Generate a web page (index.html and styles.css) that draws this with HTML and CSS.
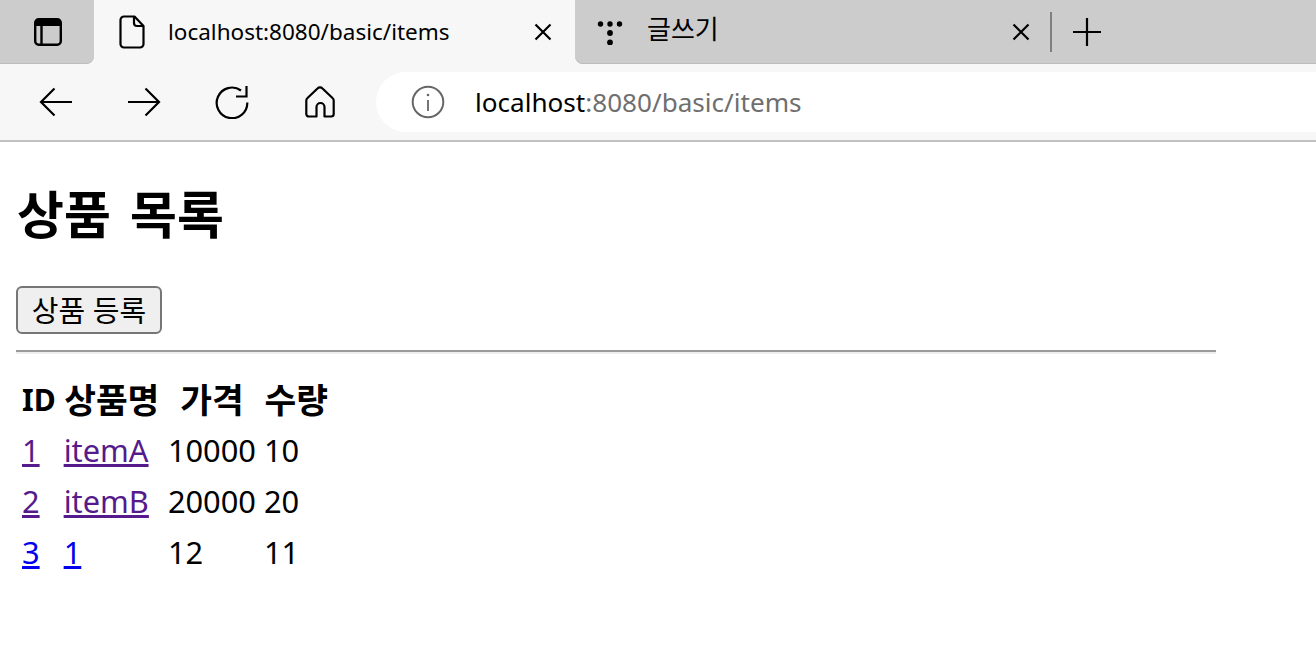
FILE: index.html

```html
<!DOCTYPE html>
<html lang="ko">
<head>
    <meta charset="UTF-8">
    <title>상품 목록</title>
    <link rel="stylesheet" href="styles.css">
</head>
<body>
<!-- Browser chrome -->
<header class="browser-chrome">
    <div class="tab-strip">
        <div class="tab-actions">
            <svg class="icon" width="30" height="30" viewBox="0 0 30 30" fill="none" stroke="#000" stroke-width="2.4">
                <rect x="2.2" y="2.2" width="25.6" height="25.6" rx="3.5"/>
                <path d="M3 3h24v6H3z" fill="#000" stroke="none"/>
                <path d="M8.5 9v19"/>
            </svg>
        </div>
        <div class="tab tab-active">
            <svg class="icon tab-icon" width="26" height="34" viewBox="0 0 26 34" fill="none" stroke="#000" stroke-width="2.2" stroke-linejoin="round">
                <path d="M5 1.5h10.5L24.5 11v18a3.500 3.500 0 0 1-3.500 3.500H5A3.500 3.500 0 0 1 1.500 29V5A3.500 3.500 0 0 1 5 1.500z"/>
                <path d="M15 1.500V8a3 3 0 0 0 3 3h6.500"/>
            </svg>
            <span class="tab-title">localhost:8080/basic/items</span>
            <svg class="icon" width="18" height="18" viewBox="0 0 18 18" stroke="#000" stroke-width="2.200">
                <path d="M1.500 1.500l15 15M16.500 1.500l-15 15"/>
            </svg>
        </div>
        <div class="tab-rest">
            <div class="tab">
                <svg class="icon tab-icon" width="26" height="26" viewBox="0 0 26 26" fill="#000">
                    <circle cx="3.500" cy="5" r="2.700"/>
                    <circle cx="13" cy="5" r="2.700"/>
                    <circle cx="22.500" cy="5" r="2.700"/>
                    <circle cx="13" cy="14" r="2.900"/>
                    <circle cx="13" cy="23.500" r="2.900"/>
                </svg>
                <span class="tab-title tab-title-ko">글쓰기</span>
                <svg class="icon" width="18" height="18" viewBox="0 0 18 18" stroke="#000" stroke-width="2.200">
                    <path d="M1.500 1.500l15 15M16.500 1.500l-15 15"/>
                </svg>
            </div>
            <div class="tab-divider"></div>
            <svg class="icon new-tab" width="28" height="28" viewBox="0 0 28 28" stroke="#000" stroke-width="2.200">
                <path d="M14 0v28M0 14h28"/>
            </svg>
        </div>
    </div>
    <nav class="toolbar">
        <div class="nav-button">
            <svg class="icon" width="34" height="30" viewBox="0 0 34 30" fill="none" stroke="#000" stroke-width="2.200">
                <path d="M33 15H2M15.500 1.500L2 15l13.500 13.500"/>
            </svg>
        </div>
        <div class="nav-button">
            <svg class="icon" width="34" height="30" viewBox="0 0 34 30" fill="none" stroke="#000" stroke-width="2.200">
                <path d="M1 15h31M18.500 1.500L32 15 18.500 28.500"/>
            </svg>
        </div>
        <div class="nav-button">
            <svg class="icon" width="34" height="34" viewBox="0 0 34 34" fill="none" stroke="#000" stroke-width="2.200">
                <path d="M26 5.500A15.300 15.300 0 1 0 32.300 17.500"/>
                <path d="M31.500 1v10.500H21"/>
            </svg>
        </div>
        <div class="nav-button">
            <svg class="icon" width="30" height="32" viewBox="0 0 30 32" fill="none" stroke="#000" stroke-width="2.200" stroke-linejoin="round">
                <path d="M12.500 2.500a3.500 3.500 0 0 1 5 0l10 9.500a3.500 3.500 0 0 1 1.200 2.600V28a2.500 2.500 0 0 1-2.500 2.500h-6.700V21a4 4 0 0 0-8 0v9.500H4a2.500 2.500 0 0 1-2.700-2.500V14.600A3.500 3.500 0 0 1 2.500 12z"/>
            </svg>
        </div>
        <div class="address-bar">
            <svg class="icon" width="34" height="34" viewBox="0 0 34 34" fill="none" stroke="#666" stroke-width="2">
                <circle cx="17" cy="17" r="15.300"/>
                <path d="M17 15v11" stroke-width="1.800"/>
                <circle cx="17" cy="10" r="1.300" fill="#666" stroke="none"/>
            </svg>
            <span class="address-text">localhost<span class="address-path">:8080/basic/items</span></span>
        </div>
    </nav>
</header>

<!-- Page content -->
<main class="page-content">
    <h1 class="page-title">상품 목록</h1>
    <button class="add-button" type="button">상품 등록</button>
    <hr class="divider">
    <table class="item-table">
        <thead>
        <tr>
            <th class="id-head">ID</th>
            <th>상품명</th>
            <th>가격</th>
            <th>수량</th>
        </tr>
        </thead>
        <tbody>
        <tr>
            <td><a class="visited" href="#">1</a></td>
            <td><a class="visited" href="#">itemA</a></td>
            <td>10000</td>
            <td>10</td>
        </tr>
        <tr>
            <td><a class="visited" href="#">2</a></td>
            <td><a class="visited" href="#">itemB</a></td>
            <td>20000</td>
            <td>20</td>
        </tr>
        <tr>
            <td><a href="#">3</a></td>
            <td><a href="#">1</a></td>
            <td>12</td>
            <td>11</td>
        </tr>
        </tbody>
    </table>
</main>
</body>
</html>
```

FILE: styles.css

```css
/* Body styling */
body {
    font-family: "Noto Sans", "Noto Sans CJK KR", sans-serif;
    background-color: #fff;
    color: #000;
    margin: 0;
    padding: 0;
}

.icon {
    display: block;
    flex: none;
}

/* Tab strip */
.tab-strip {
    display: flex;
    align-items: center;
    height: 64px;
    background-color: #f7f7f7;
}

.tab-actions {
    display: flex;
    align-items: center;
    justify-content: center;
    width: 94px;
    height: 64px;
    padding-left: 2px;
    box-sizing: border-box;
    background-color: #ccc;
    border-radius: 0 0 8px 0;
    box-shadow: inset 0 -1px 0 #bdbdbd;
}

.tab-rest {
    display: flex;
    align-items: center;
    flex: 1;
    height: 64px;
    background-color: #ccc;
    border-radius: 0 0 0 8px;
    box-shadow: inset 0 -1px 0 #bdbdbd;
}

.tab {
    display: flex;
    align-items: center;
    width: 475px;
    height: 64px;
    padding: 0 20px 0 22px;
    box-sizing: border-box;
    font-size: 24px;
}

.tab-active {
    width: 481px;
    padding: 0 23px 0 25px;
    background-color: #f7f7f7;
    border-radius: 10px 10px 0 0;
}

.tab-icon {
    margin-right: 23px;
}

.tab-title {
    flex: 1;
    margin-bottom: 2px;
    font-size: 22.5px;
    white-space: nowrap;
}

.tab-title-ko {
    margin-bottom: 8px;
    margin-left: 1px;
    font-size: 26px;
}

.tab-divider {
    width: 2px;
    height: 40px;
    background-color: #7f7f7f;
}

.new-tab {
    margin-left: 21px;
}

/* Toolbar */
.toolbar {
    display: flex;
    align-items: center;
    height: 76px;
    padding: 0 0 0 12px;
    background-color: #f7f7f7;
    border-bottom: 2px solid #c0c0c0;
}

.nav-button {
    display: flex;
    align-items: center;
    justify-content: center;
    width: 88px;
    height: 60px;
}

.address-bar {
    display: flex;
    align-items: center;
    flex: 1;
    height: 60px;
    margin-left: 12px;
    padding-left: 35px;
    background-color: #fff;
    border-radius: 30px 0 0 30px;
}

.address-text {
    margin-left: 30px;
    font-size: 26.100px;
}

.address-path {
    color: #6f6f6f;
}

/* Page content */
.page-content {
    width: 1200px;
    padding: 0 16px;
}

.page-title {
    margin: 0;
    padding-top: 40px;
    padding-left: 1px;
    font-size: 51px;
    line-height: 64px;
    font-weight: 700;
    word-spacing: 6px;
}

/* Add button */
.add-button {
    display: block;
    width: 146px;
    height: 48px;
    margin: 40px 0 0;
    padding: 0 0 3px;
    font-family: inherit;
    font-size: 29px;
    color: #000;
    background-color: #efefef;
    border: 2px solid #767676;
    border-radius: 6px;
}

.divider {
    height: 0;
    margin: 16px 0 0;
    border: 0;
    border-top: 2px solid #9a9a9a;
    border-bottom: 2px solid #eee;
}

/* Item table */
.item-table {
    margin-top: 18px;
    border-spacing: 4px;
    font-size: 30.800px;
    line-height: 47px;
}

.item-table th,
.item-table td {
    padding: 0 2px;
    white-space: nowrap;
}

.item-table th {
    padding: 0 2.500px;
    font-size: 34.500px;
}

.item-table .id-head {
    padding: 0 2px;
    font-size: 30px;
}

.item-table a {
    color: #00e;
}

.item-table a.visited {
    color: #551a8b;
}
```
